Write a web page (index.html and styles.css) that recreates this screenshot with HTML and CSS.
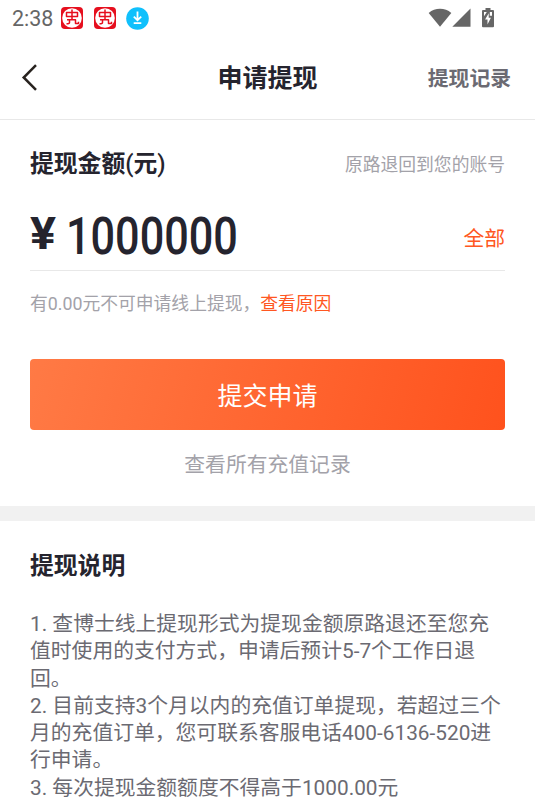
FILE: index.html
```
<!DOCTYPE html>
<html lang="zh-CN">
<head>
    <meta charset="UTF-8">
    <title>申请提现</title>
    <link rel="stylesheet" href="styles.css">
</head>
<body>

<div class="status-bar">
    <span class="time">2:38</span>
    <svg class="app-icon" viewBox="0 0 22 22">
        <rect width="22" height="22" rx="4" fill="#e60f1e"/>
        <circle cx="11" cy="11" r="9.8" fill="#fff"/>
        <path d="M5.5 5.5h11v4h-11zM11 2.6v10.2M6 12.8h8.5v3.7h3v-1.8M8.5 12.8v2.7q0 1.3-3 1.3" fill="none" stroke="#e60f1e" stroke-width="1.5" stroke-linejoin="round"/>
    </svg>
    <svg class="app-icon" viewBox="0 0 22 22">
        <rect width="22" height="22" rx="4" fill="#e60f1e"/>
        <circle cx="11" cy="11" r="9.8" fill="#fff"/>
        <path d="M5.5 5.5h11v4h-11zM11 2.6v10.2M6 12.8h8.5v3.7h3v-1.8M8.5 12.8v2.7q0 1.3-3 1.3" fill="none" stroke="#e60f1e" stroke-width="1.5" stroke-linejoin="round"/>
    </svg>
    <svg class="download-icon" viewBox="0 0 23 23">
        <circle cx="11.5" cy="11.5" r="11.3" fill="#10c0fc"/>
        <path d="M11.5 4.5v8.2M7.8 9.6l3.7 3.6 3.7-3.6M7.7 16.2h7.6" fill="none" stroke="#fff" stroke-width="1.8"/>
    </svg>
    <div class="system-icons">
        <svg width="24" height="20" viewBox="0 0 24 20">
            <path d="M.7 5C7 -.6 17 -.6 23.3 5L12 18.8z" fill="#666"/>
        </svg>
        <svg width="19" height="20" viewBox="0 0 19 20">
            <path d="M18.5.5v18.3H.3z" fill="#666"/>
        </svg>
        <svg class="battery" width="12" height="20" viewBox="0 0 12 20">
            <path d="M3.5 0h5v2H11q1 0 1 1v15.2q0 1-1 1H1q-1 0-1-1V3q0-1 1-1h2.5z" fill="#666"/>
            <path d="M6.7 5.3v4.5h2.2L5.5 16.4v-5H3.1z" fill="#fff"/>
            <path d="M2 4h2.8L2 8.3zM7.8 4H10v3.7H7.8z" fill="#fff"/>
        </svg>
    </div>
</div>

<div class="nav">
    <svg class="back" width="18" height="28" viewBox="0 0 18 28">
        <path d="M16 1.1L3.7 13.5 16 25.9" fill="none" stroke="#28231f" stroke-width="2.5"/>
    </svg>
    <h1>申请提现</h1>
    <a class="nav-link">提现记录</a>
</div>

<div class="withdraw">
    <div class="row">
        <h2>提现金额<span class="paren">(</span>元<span class="paren">)</span></h2>
        <span class="note">原路退回到您的账号</span>
    </div>
    <div class="amount-row">
        <span class="yen">¥</span>
        <span class="amount">1000000</span>
        <a class="all">全部</a>
    </div>
    <p class="hint">有0.00元不可申请线上提现，<a>查看原因</a></p>
    <button class="submit">提交申请</button>
    <a class="records">查看所有充值记录</a>
</div>

<div class="explain">
    <h2>提现说明</h2>
    <p>1. 查博士线上提现形式为提现金额原路退还至您充值时使用的支付方式，申请后预计5-7个工作日退回。</p>
    <p>2. 目前支持3个月以内的充值订单提现，若超过三个月的充值订单，您可联系客服电话400-6136-520进行申请。</p>
    <p>3. 每次提现金额额度不得高于1000.00元</p>
</div>

</body>
</html>
```
FILE: styles.css
```
* {
    box-sizing: border-box;
}

body, h1, h2, p {
    margin: 0;
}

body {
    width: 535px;
    height: 805px;
    overflow: hidden;
    background: #fff;
    color: #25242e;
    font-family: Roboto, "Noto Sans CJK SC", sans-serif;
    font-size: 20.8px;
}

svg {
    display: block;
    flex: none;
}

.status-bar {
    display: flex;
    align-items: center;
    height: 36px;
    padding-left: 12px;
}

.time {
    width: 49px;
    color: #666;
    font-size: 21.5px;
}

.app-icon {
    width: 22px;
    height: 22px;
    margin-right: 11px;
}

.download-icon {
    width: 23px;
    height: 23px;
    margin-left: -1px;
}

.system-icons {
    display: flex;
    margin-left: auto;
    padding-right: 41px;
}

.battery {
    margin-left: 11px;
}

.nav {
    display: grid;
    grid-template-columns: 1fr auto 1fr;
    align-items: center;
    height: 84px;
    padding: 0 24px;
    border-bottom: 1px solid #e8e8e8;
}

.back {
    margin-left: -4px;
}

.nav h1 {
    padding-top: 3px;
    font-size: 25px;
    font-weight: 700;
    line-height: 34px;
}

.nav-link {
    justify-self: end;
    padding-bottom: 2px;
    color: #6b6a72;
    font-weight: 700;
}

h2 {
    font-size: 23.8px;
    font-weight: 700;
    line-height: 34px;
}

.paren {
    font-weight: 500;
}

.withdraw {
    display: flex;
    flex-direction: column;
    height: 401px;
    padding: 27px 30px 0;
    border-bottom: 15px solid #f1f1f1;
}

.row {
    display: flex;
    align-items: center;
    justify-content: space-between;
}

.note {
    padding-bottom: 2px;
    color: #a3a2a9;
    font-size: 17.8px;
}

.amount-row {
    display: flex;
    align-items: center;
    height: 90px;
    padding-top: 22px;
    border-bottom: 1px solid #e8e8e8;
}

.yen {
    width: 36px;
    padding-bottom: 6px;
    font-size: 45px;
    font-weight: 700;
    line-height: 50px;
    transform: scaleX(1.08);
    transform-origin: left;
}

.amount {
    font-size: 52px;
    font-weight: 500;
    line-height: 60px;
    transform: scaleX(0.831);
    transform-origin: left;
}

.all {
    margin-left: auto;
    color: #ff5722;
}

.hint {
    margin-top: 20px;
    color: #a3a2a9;
    font-size: 17.8px;
    line-height: 26px;
}

.hint a {
    color: #ff5722;
}

.submit {
    height: 71px;
    margin-top: 42px;
    padding: 0 0 2px;
    border: 0;
    border-radius: 4px;
    background: linear-gradient(105deg, #ff7a45, #ff521d);
    color: #fff;
    font-family: inherit;
    font-size: 25px;
}

.records {
    margin-top: 20px;
    color: #a3a2a9;
    line-height: 30px;
    text-align: center;
}

.explain {
    padding: 28px 30px 0;
}

.explain h2 {
    margin-bottom: 28px;
}

.explain p {
    color: #6b6a72;
    line-height: 27.25px;
}
```
